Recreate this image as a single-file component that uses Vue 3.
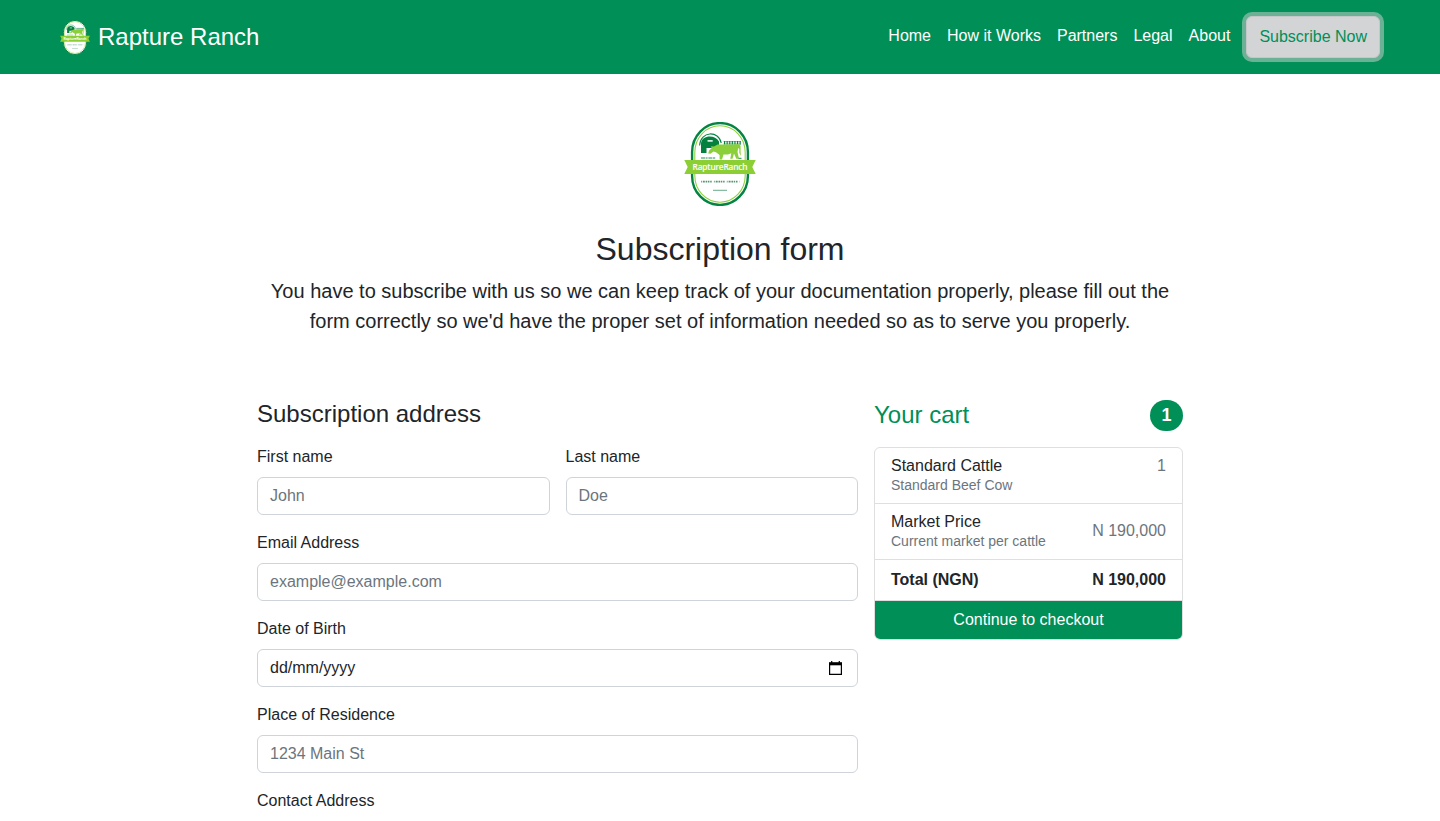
<script setup>
import { h } from 'vue'

const links = ['Home', 'How it Works', 'Partners', 'Legal', 'About']

const items = [
  { name: 'Standard Cattle', note: 'Standard Beef Cow', value: '1', top: true },
  { name: 'Market Price', note: 'Current market per cattle', value: 'N 190,000' },
]

const RanchLogo = () =>
  h('svg', { viewBox: '0 0 72 84', 'aria-label': 'Rapture Ranch' }, [
    h('rect', { x: 8.1, y: 1.1, width: 55.8, height: 81.8, rx: 27.9, ry: 29, fill: '#fff', stroke: '#048443', 'stroke-width': 2.4 }),
    h('rect', { x: 10.8, y: 3.8, width: 50.4, height: 76.4, rx: 25.2, ry: 26.5, fill: 'none', stroke: '#8fd03c', 'stroke-width': 1.1 }),
    // barn arch and silo
    h('path', { d: 'M15.600 23.500C16.500 8.500 35 8.500 37.200 21', fill: 'none', stroke: '#048443', 'stroke-width': 1.1 }),
    h('path', { d: 'M17 31V21.500C17.500 13 31 12 35 19.500V23L30 26H22.500V31Z', fill: '#04803f' }),
    h('path', { d: 'M23.500 18.900H28.700', stroke: '#fff', 'stroke-width': 1.5 }),
    // fence
    h('path', { d: 'M39.500 19.700H57M39.500 22H57', stroke: '#048443', 'stroke-width': 0.6 }),
    h('path', { d: 'M40 20.800H57', stroke: '#048443', 'stroke-width': 3.4, 'stroke-dasharray': '1.100 1.500' }),
    // cow
    h('path', {
      d: 'M24.200 31.600L25 28.500L27.600 26.200L27 24.300L30 24.600L33.500 22.600H49L54 22L56.600 23.600V30L57 34L55.300 31V27L54.200 26L53.500 30L55 36.800H52.300L50 31.500L48.500 36.800H46.300L47.300 31.200L44 32.600H39.500L38 37.500H35.600L35.600 33L32 30.300L29.500 29.600L26.500 31.800Z',
      fill: '#8bcf3a',
    }),
    h('path', { d: 'M17 36H32M54.500 36.300H57.500', stroke: '#048443', 'stroke-width': 0.9, 'stroke-dasharray': '4 .6 2 .8' }),
    // ribbon
    h('path', { d: 'M.3 38H71.700L68.300 45L71.700 52H.3L3.700 45Z', fill: '#8bcf35' }),
    h(
      'text',
      { x: 36, y: 48.3, 'text-anchor': 'middle', textLength: 55, 'font-family': '"Noto Sans", sans-serif', 'font-size': 8.3, 'font-weight': 500, fill: '#fff', stroke: '#fff', 'stroke-width': 0.15 },
      'RaptureRanch'
    ),
    h('path', { d: 'M17 59.600H56', stroke: '#579572', 'stroke-width': 1.6, 'stroke-dasharray': '.8 1 2 .8 1.700 .7 1.400 .8 1.500 2.200' }),
    h('path', { d: 'M29 68.300H43', stroke: '#5aa27b', 'stroke-width': 0.9 }),
  ])
</script>

<template>
  <div class="page">
    <header class="navbar">
      <a class="brand">
        <RanchLogo class="brand-logo" />
        <span>Rapture Ranch</span>
      </a>
      <nav class="nav">
        <a v-for="link in links" :key="link" class="nav-link">{{ link }}</a>
        <button class="subscribe">Subscribe Now</button>
      </nav>
    </header>

    <main class="content">
      <section class="intro">
        <RanchLogo class="intro-logo" />
        <h2>Subscription form</h2>
        <p>
          You have to subscribe with us so we can keep track of your documentation properly, please fill out the
          form correctly so we'd have the proper set of information needed so as to serve you properly.
        </p>
      </section>

      <div class="columns">
        <form class="form">
          <h4>Subscription address</h4>
          <div class="names">
            <label class="field">First name<input type="text" placeholder="John" /></label>
            <label class="field">Last name<input type="text" placeholder="Doe" /></label>
          </div>
          <label class="field">Email Address<input type="email" placeholder="example@example.com" /></label>
          <label class="field">
            Date of Birth
            <span class="date">
              dd/mm/yyyy
              <svg class="calendar" viewBox="0 0 13 15">
                <path d="M2.700 0V2M10.300 0V2" stroke="#000" stroke-width="1.200" />
                <path d="M.6 2.500H12.400V13.400H.6Z" fill="none" stroke="#000" stroke-width="1.200" />
                <path d="M0 1.200H13V4.300H0Z" />
              </svg>
            </span>
          </label>
          <label class="field">Place of Residence<input type="text" placeholder="1234 Main St" /></label>
          <label class="field">Contact Address<input type="text" /></label>
        </form>

        <aside class="cart">
          <h4><span>Your cart</span><span class="badge">1</span></h4>
          <div class="list">
            <div v-for="item in items" :key="item.name" class="item" :class="{ top: item.top }">
              <div>
                <h6>{{ item.name }}</h6>
                <small>{{ item.note }}</small>
              </div>
              <span class="value">{{ item.value }}</span>
            </div>
            <div class="total"><b>Total (NGN)</b><b>N 190,000</b></div>
            <button class="checkout">Continue to checkout</button>
          </div>
        </aside>
      </div>
    </main>
  </div>
</template>

<style>
body {
  margin: 0;
  overflow: hidden;
}
</style>

<style scoped>
* {
  box-sizing: border-box;
}
.page {
  height: 821px;
  overflow: hidden;
  background: #fff;
  color: #212529;
  font: 16px/24px 'Liberation Sans', Arial, sans-serif;
}
h2,
h4,
h6,
p {
  margin: 0;
  font-weight: 400;
}
button,
input {
  font: inherit;
}
.navbar {
  height: 74px;
  padding: 0 60px;
  display: flex;
  align-items: center;
  justify-content: space-between;
  background: #008f57;
  color: #fff;
}
.brand {
  display: flex;
  align-items: center;
  gap: 8px;
  font-size: 24px;
}
.brand-logo {
  width: 30px;
  height: 35px;
}
.nav {
  display: flex;
  align-items: center;
}
.nav-link {
  padding: 0 8px 3px;
}
.subscribe {
  margin-left: 8px;
  height: 42px;
  padding: 0 12px;
  border: 1px solid #c6c7c8;
  border-radius: 6px;
  background: #d3d4d5;
  color: #008f57;
  box-shadow: 0 0 0 4px rgba(211, 212, 213, 0.5);
}
.content {
  width: 926px;
  margin: 0 auto;
}
.intro {
  padding: 48px 0;
  text-align: center;
}
.intro-logo {
  display: block;
  width: 72px;
  height: 84px;
  margin: 0 auto 24px;
}
.intro h2 {
  margin-bottom: 8px;
  font-size: 32px;
  line-height: 38px;
}
.intro p {
  font-size: 20px;
  line-height: 30px;
}
.columns {
  margin-top: 16px;
  display: grid;
  grid-template-columns: 601px 309px;
  gap: 16px;
  align-items: start;
}
.form,
.names {
  display: grid;
  gap: 16px;
}
.names {
  grid-template-columns: 1fr 1fr;
}
h4 {
  font-size: 24px;
  line-height: 27px;
  padding-bottom: 2px;
}
.field {
  display: block;
}
.field input,
.date {
  display: block;
  width: 100%;
  height: 38px;
  margin-top: 8px;
  padding: 6px 12px;
  border: 1px solid #ced4da;
  border-radius: 6px;
  background: #fff;
  outline: none;
}
.field input::placeholder {
  color: #6c757d;
  opacity: 1;
}
.date {
  display: flex;
  align-items: center;
  justify-content: space-between;
  padding-right: 15px;
}
.calendar {
  width: 13px;
  height: 15px;
}
.cart h4 {
  display: flex;
  align-items: flex-start;
  justify-content: space-between;
  height: 31px;
  margin-bottom: 16px;
  padding: 0;
  line-height: 29px;
  color: #008f57;
}
.badge {
  width: 33px;
  height: 31px;
  border-radius: 16px;
  background: #008f57;
  color: #fff;
  font-size: 18px;
  font-weight: 700;
  line-height: 31px;
  text-align: center;
}
.list {
  border: 1px solid #dfdfdf;
  border-radius: 6px;
  overflow: hidden;
}
.item,
.total {
  display: flex;
  justify-content: space-between;
  align-items: center;
  padding: 0 16px;
  border-bottom: 1px solid #dfdfdf;
}
.item {
  height: 56px;
}
.value {
  padding-bottom: 2px;
}
.item.top .value {
  align-self: flex-start;
  margin-top: 6px;
}
.total {
  height: 41px;
}
h6 {
  font-size: 16px;
  line-height: 19px;
}
.item small {
  display: block;
  font-size: 14px;
  line-height: 20px;
}
.item small,
.value {
  color: #6c757d;
}
.checkout {
  display: block;
  width: 100%;
  height: 38px;
  padding: 0;
  border: 0;
  background: #008f57;
  color: #fff;
}
</style>
